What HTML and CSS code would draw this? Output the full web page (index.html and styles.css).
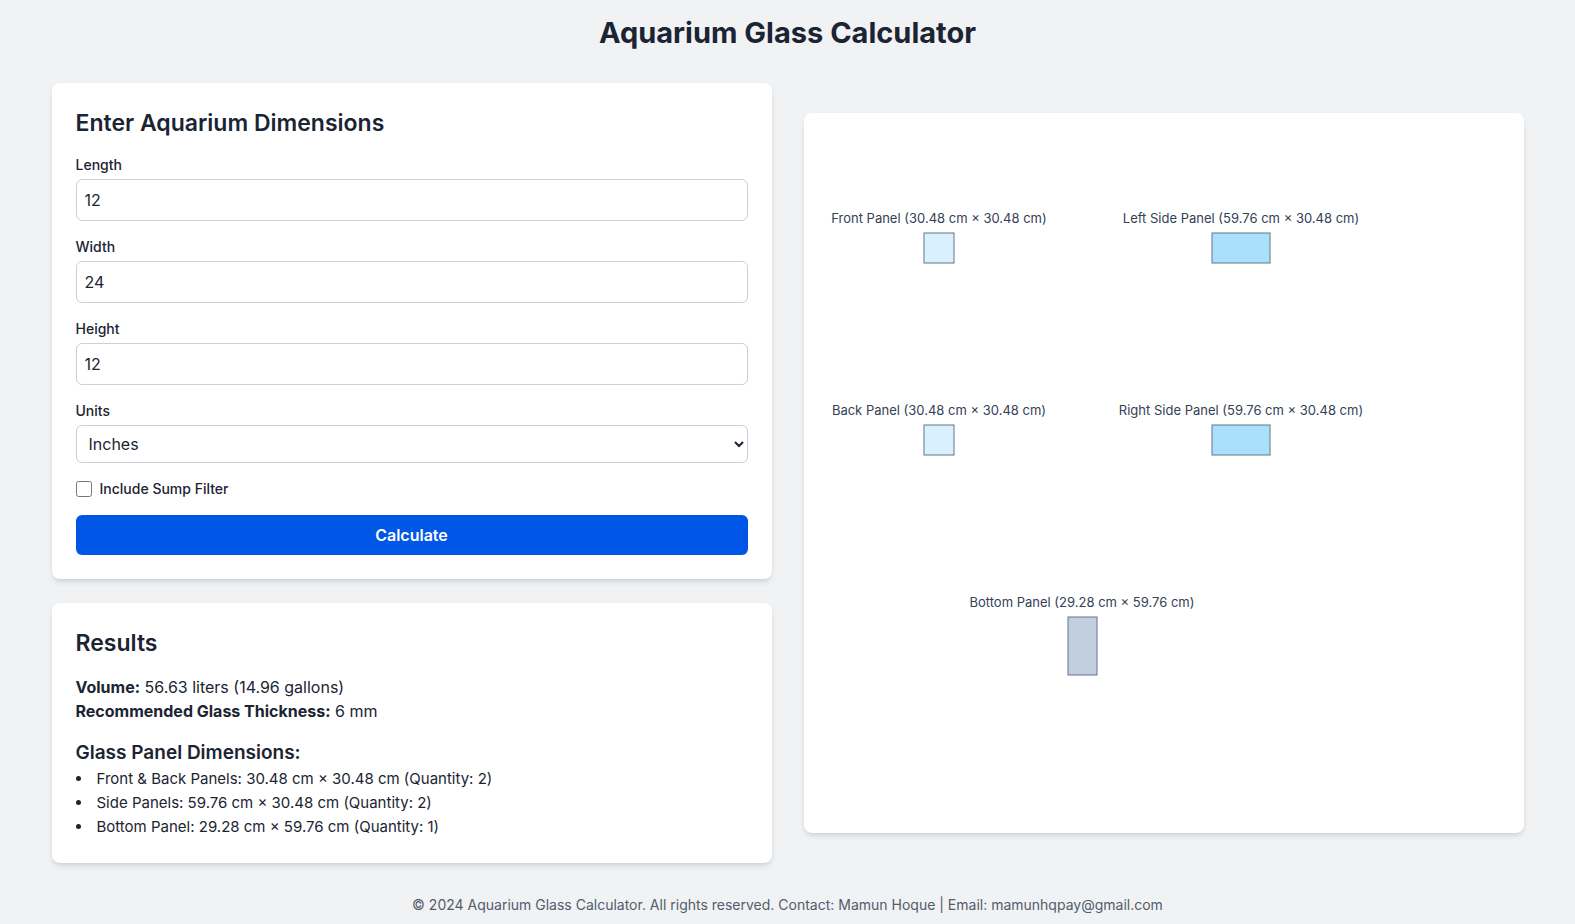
FILE: index.html
```html
<!DOCTYPE html>
<html lang="en">
<head>
<meta charset="utf-8">
<title>Aquarium Glass Calculator</title>
<link rel="stylesheet" href="styles.css">
</head>
<body>
<header class="page-header"><h1>Aquarium Glass Calculator</h1></header>
<main class="layout">
  <div class="column">
    <section class="card">
      <h2>Enter Aquarium Dimensions</h2>
      <form class="form">
        <div class="field"><label for="length">Length</label><input class="control" id="length" type="text" inputmode="decimal" value="12"></div>
        <div class="field"><label for="width">Width</label><input class="control" id="width" type="text" inputmode="decimal" value="24"></div>
        <div class="field"><label for="height">Height</label><input class="control" id="height" type="text" inputmode="decimal" value="12"></div>
        <div class="field"><label for="units">Units</label>
          <select class="control select" id="units"><option>Inches</option><option>Centimeters</option></select></div>
        <div class="check"><input id="sump" type="checkbox"><label for="sump">Include Sump Filter</label></div>
        <button class="submit" type="button">Calculate</button>
      </form>
    </section>
    <section class="card">
      <h2>Results</h2>
      <div class="summary">
        <p><strong>Volume:</strong> 56.63 liters (14.96 gallons)</p>
        <p><strong>Recommended Glass Thickness:</strong> 6 mm</p>
      </div>
      <h3>Glass Panel Dimensions:</h3>
      <ul class="panels">
        <li>Front &amp; Back Panels: 30.48 cm × 30.48 cm (Quantity: 2)</li>
        <li>Side Panels: 59.76 cm × 30.48 cm (Quantity: 2)</li>
        <li>Bottom Panel: 29.28 cm × 59.76 cm (Quantity: 1)</li>
      </ul>
    </section>
  </div>
  <section class="card diagram">
    <svg viewBox="0 0 720 720" role="img" aria-label="Glass panels">
      <g class="panel-label">
        <text x="135" y="110">Front Panel (30.48 cm × 30.48 cm)</text>
        <text x="437" y="110">Left Side Panel (59.76 cm × 30.48 cm)</text>
        <text x="135" y="302">Back Panel (30.48 cm × 30.48 cm)</text>
        <text x="437" y="302">Right Side Panel (59.76 cm × 30.48 cm)</text>
        <text x="278" y="494">Bottom Panel (29.28 cm × 59.76 cm)</text>
      </g>
      <g class="glass">
        <rect class="front" x="120" y="120" width="30" height="30"/>
        <rect class="side" x="408" y="120" width="58" height="30"/>
        <rect class="front" x="120" y="312" width="30" height="30"/>
        <rect class="side" x="408" y="312" width="58" height="30"/>
        <rect class="bottom" x="264" y="504" width="29" height="58"/>
      </g>
    </svg>
  </section>
</main>
<footer class="page-footer">© 2024 Aquarium Glass Calculator. All rights reserved. Contact: Mamun Hoque | Email: mamunhqpay@gmail.com</footer>
</body>
</html>
```
FILE: styles.css
```css
* { box-sizing: border-box; margin: 0; padding: 0; }
body { background: #f0f2f4; color: #1b2432; font: 16px/24px Inter, sans-serif; }
.page-header { padding: 15px 16px 16px; text-align: center; }
h1 { font-size: 29px; line-height: 36px; font-weight: 700; }
h2 { font-size: 23px; line-height: 32px; font-weight: 600; }
h3 { font-size: 19px; line-height: 28px; font-weight: 600; margin-top: 16px; }
.layout { display: grid; grid-template-columns: 1fr 1fr; gap: 32px; align-items: center; max-width: 1504px; margin: 0 auto; padding: 16px 16px 0; }
.column { display: grid; gap: 24px; }
.card { background: #fff; border-radius: 8px; padding: 24px; box-shadow: 0 4px 6px -1px rgb(0 0 0 / 10%), 0 2px 4px -2px rgb(0 0 0 / 10%); }
.form { display: grid; gap: 16px; margin-top: 16px; }
.field { display: grid; }
label { font-size: 14px; line-height: 20px; font-weight: 500; }
.control { width: 100%; height: 42px; margin-top: 4px; padding: 8px; border: 1px solid #cbd0d8; border-radius: 6px; background: #fff; color: inherit; font: inherit; }
.select { height: 38px; padding: 0 8px; }
.check { display: flex; align-items: center; gap: 8px; }
.check input { width: 16px; height: 16px; }
.submit { height: 40px; border: 0; border-radius: 6px; background: #0056e6; color: #fff; font: inherit; font-weight: 600; }
.summary { margin-top: 16px; }
.panels { list-style: disc inside; font-size: 15px; }
.diagram { padding: 0; }
.diagram svg { display: block; width: 100%; }
.panel-label { font-size: 13px; text-anchor: middle; fill: #334155; }
.glass { stroke: #64748b; }
.front { fill: #d9f1ff; }
.side { fill: #a9e1fd; }
.bottom { fill: #c2cfde; }
.page-footer { padding: 32px 16px 8px; text-align: center; font-size: 14px; line-height: 20px; color: #535c6d; }
```
